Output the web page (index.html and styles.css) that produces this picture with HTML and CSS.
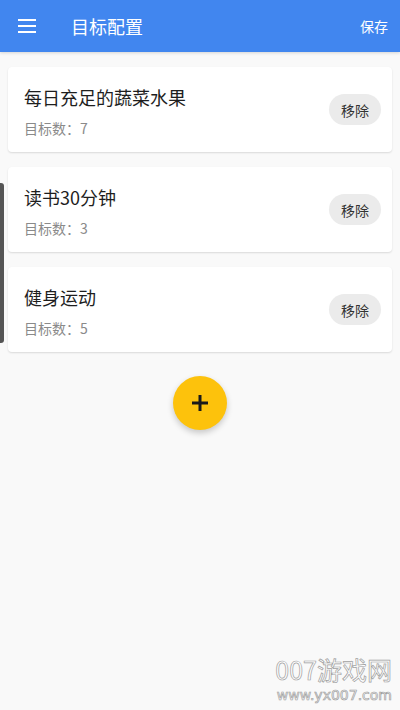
FILE: index.html
```html
<!DOCTYPE html>
<html lang="zh-CN">
<head>
  <meta charset="UTF-8" />
  <meta name="viewport" content="width=device-width, initial-scale=1" />
  <title>目标配置</title>
  <link rel="stylesheet" href="styles.css">
</head>
<body>
  <header class="appbar">
    <svg class="menu-icon" viewBox="0 0 18 14" aria-label="menu">
      <rect x="0" y="0" width="18" height="2" />
      <rect x="0" y="6" width="18" height="2" />
      <rect x="0" y="12" width="18" height="2" />
    </svg>
    <h1 class="title">目标配置</h1>
    <span class="save">保存</span>
  </header>

  <main class="list">
    <div class="card">
      <div class="info">
        <div class="name">每日充足的蔬菜水果</div>
        <div class="count">目标数：7</div>
      </div>
      <button class="remove">移除</button>
    </div>
    <div class="card">
      <div class="info">
        <div class="name">读书30分钟</div>
        <div class="count">目标数：3</div>
      </div>
      <button class="remove">移除</button>
    </div>
    <div class="card">
      <div class="info">
        <div class="name">健身运动</div>
        <div class="count">目标数：5</div>
      </div>
      <button class="remove">移除</button>
    </div>

    <div class="fab-row">
      <button class="fab" aria-label="add">
        <svg viewBox="0 0 20 20"><path d="M10 2v16M2 10h16" /></svg>
      </button>
    </div>
  </main>

  <!-- side handle -->
  <div class="edge-handle"></div>

  <div class="watermark">
    <div class="wm-big">007游戏网</div>
    <div class="wm-small">www.yx007.com</div>
  </div>
</body>
</html>
```

FILE: styles.css
```css
body {
  margin: 0;
  background: #f9f9f9;
  font-family: "Noto Sans CJK SC", "Noto Sans", Roboto, sans-serif;
  height: 710px;
  overflow: hidden;
  position: relative;
}

.appbar {
  height: 52px;
  background: #4186ef;
  display: flex;
  align-items: center;
  padding: 0 12px 0 18px;
  color: #fff;
  box-shadow: 0 1px 3px rgba(0,0,0,0.15);
}
.menu-icon {
  width: 18px;
  height: 14px;
  fill: #fff;
}
.title {
  margin: 0 0 0 35px;
  font-size: 18px;
  font-weight: 400;
  flex: 1;
}
.save {
  font-size: 14px;
}

.list {
  padding: 15px 8px 0 8px;
  display: flex;
  flex-direction: column;
  gap: 15px;
}
.card {
  height: 85px;
  box-sizing: border-box;
  background: #fff;
  border-radius: 4px;
  box-shadow: 0 1px 2px rgba(0,0,0,0.13);
  display: flex;
  align-items: center;
  padding: 0 11px 0 16px;
}
.info {
  flex: 1;
  display: flex;
  flex-direction: column;
  gap: 9px;
  padding-top: 4px;
}
.name {
  font-size: 18px;
  line-height: 24px;
  color: #1e1e1e;
}
.count {
  font-size: 14px;
  line-height: 20px;
  color: #8a8a8a;
}
.remove {
  border: none;
  background: #ebebeb;
  border-radius: 16px;
  width: 52px;
  height: 31px;
  padding: 0;
  font-family: inherit;
  font-size: 14px;
  color: #333;
}

.fab-row {
  display: flex;
  justify-content: center;
  padding-top: 9px;
}
.fab {
  width: 54px;
  height: 54px;
  border-radius: 50%;
  border: none;
  background: #fdc20c;
  box-shadow: 0 3px 6px rgba(0,0,0,0.2);
  display: flex;
  align-items: center;
  justify-content: center;
  padding: 0;
}
.fab svg {
  width: 20px;
  height: 20px;
  stroke: #1a1a1a;
  stroke-width: 3;
  fill: none;
}

.edge-handle {
  position: absolute;
  left: 0;
  top: 183px;
  width: 4px;
  height: 160px;
  background: #555;
  border-radius: 0 3px 3px 0;
}

.watermark {
  position: absolute;
  right: 8px;
  top: 654px;
  text-align: right;
  color: #fff;
  -webkit-text-stroke: 0.7px #a0a0a0;
  display: flex;
  flex-direction: column;
  gap: 3px;
}
.wm-big {
  font-size: 25px;
  line-height: 30px;
}
.wm-small {
  font-size: 14px;
  line-height: 16px;
  font-family: "DejaVu Sans", sans-serif;
}
```
